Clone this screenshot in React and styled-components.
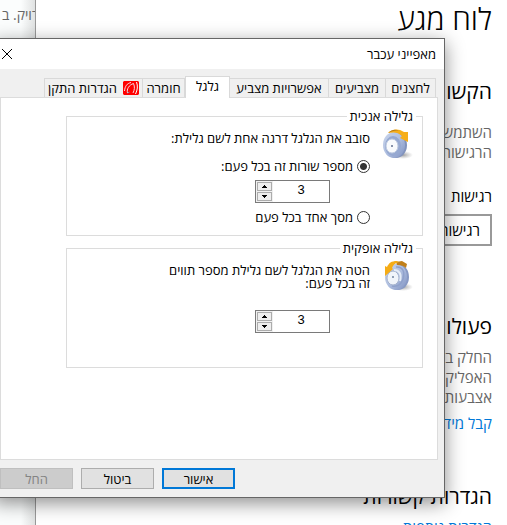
import React, { useState } from "react";
// Styling
import styled, { createGlobalStyle } from "styled-components";

const tabs = [
  { label: "לחצנים", width: 50 },
  { label: "מצביעים", width: 57 },
  { label: "אפשרויות מצביע", width: 99 },
  { label: "גלגל", width: 45 },
  { label: "חומרה", width: 42 },
  { label: "הגדרות התקן", width: 99, logo: true },
];

// TOUCHPAD VENDOR LOGO
const DeviceLogo = () => (
  <svg width="16" height="14" viewBox="0 0 16 14" aria-hidden="true">
    <path d="M1 0h14l1 1v12l-1 1H1l-1-1V1z" fill="#f00" />
    <path
      d="M1.500 10C2 5 4 2.500 8 1.500M4.500 12C3.500 8 6 4 10.500 2.500M10.500 2.500C12 6 11.500 9 10 12"
      fill="none"
      stroke="#f3dfe4"
    />
    <path d="M13.500 1C15 5 14.500 9 12.500 13" fill="none" stroke="#fff" />
    <path d="M4.500 12l2-1" fill="none" stroke="#88a" />
  </svg>
);

// WHEEL WITH THE SCROLL ARROW, TILTED VERSION FOR HORIZONTAL SCROLLING
const WheelIcon = ({ tilted }) => (
  <Wheel width="32" height="32" viewBox="0 0 32 32" aria-hidden="true">
    <defs>
      <linearGradient id="tyre" x1="0" y1="0" x2="1" y2="1">
        <stop offset="0" stopColor="#c9d5ec" />
        <stop offset="0.5" stopColor="#afbfe0" />
        <stop offset="1" stopColor="#8093c2" />
      </linearGradient>
      <radialGradient id="floor">
        <stop offset="0" stopColor="#777" stopOpacity="0.7" />
        <stop offset="1" stopColor="#999" stopOpacity="0" />
      </radialGradient>
    </defs>
    <ellipse cx="21" cy="27" rx="10" ry="4" fill="url(#floor)" />
    {tilted ? (
      <>
        <ellipse cx="16" cy="17" rx="11" ry="13" fill="#8799c4" />
        <ellipse cx="14" cy="17" rx="11" ry="13" fill="url(#tyre)" />
        <path
          d="M14 7C21 6 23 12 21 19C19 25 15 27 10 26"
          fill="none"
          stroke="#8fa1cb"
          strokeWidth="1.5"
        />
        <path d="M14 2l6-1 5 3-1 4c-2-2-5-3-9-3z" fill="#c07f1a" />
        <ellipse cx="11" cy="18" rx="6" ry="7" fill="#f0f4fa" stroke="#a3b1cd" />
        <path d="M12 10c5 0 8 4 6 11" fill="none" stroke="#e4ebf6" strokeWidth="2" />
        <circle cx="11" cy="17" r="1" fill="#71839e" />
        <path d="M3 16V6l2 1c2-4 4-6 10-6l2 1c-4 1-6 3-7 6l1 1z" fill="#f5ac16" />
      </>
    ) : (
      <>
        <ellipse cx="14" cy="17" rx="11" ry="13" fill="#8193bd" />
        <ellipse cx="12" cy="17" rx="11" ry="13" fill="url(#tyre)" />
        <ellipse cx="11" cy="18" rx="8" ry="10" fill="#96a9d1" />
        <ellipse cx="10" cy="18" rx="6" ry="7" fill="#f9fbfd" stroke="#bdc9df" />
        <circle cx="10" cy="18" r="1" fill="#60718f" />
        <path d="M6 5C10 1 16 0 22 4h4v10l-8-4 2-2C16 4 12 4 6 5z" fill="#f6ae18" />
        <path d="M6 5c4-4 8-4 12-2-4-1-8 0-12 2z" fill="#b97a13" />
      </>
    )}
  </Wheel>
);

const Spinner = ({ label }) => {
  const [value, setValue] = useState(3);
  return (
    <SpinBox>
      <SpinInput
        aria-label={label}
        value={value}
        onChange={(e) => setValue(Number(e.target.value) || 0)}
      />
      <SpinButtons>
        <SpinButton aria-label="הגדל" onClick={() => setValue(value + 1)}>
          <svg width="5" height="3" viewBox="0 0 5 3">
            <path d="M2 0h1v1h1v1h1v1H0V2h1V1h1z" />
          </svg>
        </SpinButton>
        <SpinButton aria-label="הקטן" onClick={() => setValue(value - 1)}>
          <svg width="5" height="3" viewBox="0 0 5 3">
            <path d="M0 0h5v1H4v1H3v1H2V2H1V1H0z" />
          </svg>
        </SpinButton>
      </SpinButtons>
    </SpinBox>
  );
};

const App = () => {
  const [current, setCurrent] = useState("גלגל");
  const [mode, setMode] = useState("lines");

  return (
    <Desktop dir="rtl">
      <GlobalStyle />
      <Settings>
        <Title>לוח מגע</Title>
        <Section>
          <Heading $spaced>הקשות</Heading>
          <Note>
            השתמש
            <br />
            הרגישות
          </Note>
          <Field>
            <FieldLabel htmlFor="sensitivity">רגישות</FieldLabel>
            <Select id="sensitivity">
              <option>רגישות</option>
            </Select>
          </Field>
        </Section>
        <Section>
          <Heading>פעולות</Heading>
          <Note>
            החלק ב
            <br />
            האפליק
            <br />
            אצבעות
          </Note>
          <Link href="#more">קבל מידע</Link>
        </Section>
        <Section>
          <Heading>הגדרות קשורות</Heading>
          <Link href="#related">הגדרות נוספות</Link>
        </Section>
      </Settings>
      <BackWindow>
        <BackLine>נמצאים ה</BackLine>
        <BackLine>דויק. ב</BackLine>
      </BackWindow>

      <Dialog role="dialog" aria-labelledby="dialog-title">
        <TitleBar>
          <DialogTitle id="dialog-title">מאפייני עכבר</DialogTitle>
          <CloseButton aria-label="סגור">
            <svg width="10" height="10" viewBox="0 0 10 10">
              <path d="M0 0l10 10M10 0L0 10" stroke="#000" />
            </svg>
          </CloseButton>
        </TitleBar>
        <DialogBody>
          <TabList role="tablist">
            {tabs.map((tab) => (
              <Tab
                key={tab.label}
                role="tab"
                aria-selected={tab.label === current}
                $active={tab.label === current}
                $width={tab.width}
                onClick={() => setCurrent(tab.label)}
              >
                {tab.logo && <DeviceLogo />}
                {tab.label}
              </Tab>
            ))}
          </TabList>
          <Panel role="tabpanel">
            <Group>
              <Legend>גלילה אנכית</Legend>
              <WheelIcon />
              <GroupContent>
                <Text>סובב את הגלגל דרגה אחת לשם גלילת:</Text>
                <RadioLabel>
                  <Radio
                    name="mode"
                    checked={mode === "lines"}
                    onChange={() => setMode("lines")}
                  />
                  מספר שורות זה בכל פעם:
                </RadioLabel>
                <Spinner label="מספר שורות" />
                <RadioLabel>
                  <Radio
                    name="mode"
                    checked={mode === "screen"}
                    onChange={() => setMode("screen")}
                  />
                  מסך אחד בכל פעם
                </RadioLabel>
              </GroupContent>
            </Group>
            <Group>
              <Legend>גלילה אופקית</Legend>
              <WheelIcon tilted />
              <GroupContent $spread>
                <Text>
                  הטה את הגלגל לשם גלילת מספר תווים
                  <br />
                  זה בכל פעם:
                </Text>
                <Spinner label="מספר תווים" />
              </GroupContent>
            </Group>
          </Panel>
          <Footer>
            <Button $primary>אישור</Button>
            <Button>ביטול</Button>
            <Button disabled>החל</Button>
          </Footer>
        </DialogBody>
      </Dialog>
    </Desktop>
  );
};

const GlobalStyle = createGlobalStyle`
  * {
    box-sizing: border-box;
  }
  body {
    margin: 0;
    background: #fff;
    font-family: "Open Sans", "Liberation Sans", sans-serif;
  }
  button, input, select {
    font: inherit;
    color: inherit;
    margin: 0;
    padding: 0;
  }
`;

const Desktop = styled.div`
  position: relative;
  display: grid;
  grid-template-columns: 1fr 36px;
  height: 100vh;
  overflow: hidden;
`;

const Settings = styled.main`
  display: flex;
  flex-direction: column;
  gap: 47px;
  padding-right: 15px;
  min-width: 0;
  color: #000;
`;

const Title = styled.h1`
  margin: 0 0 -10px;
  font-size: 30px;
  font-weight: 300;
  line-height: 38px;
`;

const Section = styled.section`
  display: flex;
  flex-direction: column;
  align-items: flex-start;
`;

const Heading = styled.h2`
  margin: 0 0 ${(props) => (props.$spaced ? "15px" : "5px")};
  font-size: 21px;
  font-weight: 400;
  line-height: 32px;
`;

const Note = styled.p`
  margin: 0 0 6px;
  color: #666;
  font-size: 15px;
  line-height: 20px;
`;

const Field = styled.div`
  display: flex;
  flex-direction: column;
  gap: 8px;
  width: 50%;
  margin: 18px 0 17px;
`;

const FieldLabel = styled.label`
  font-size: 15px;
  line-height: 20px;
`;

const Select = styled.select`
  appearance: none;
  height: 32px;
  padding: 0 10px;
  border: 2px solid #999;
  border-radius: 0;
  background: #fff;
  font-size: 15px;
`;

const Link = styled.a`
  color: #0078d7;
  font-size: 15px;
  line-height: 20px;
  text-decoration: none;
`;

const BackWindow = styled.aside`
  display: flex;
  flex-direction: column;
  align-items: flex-end;
  overflow: hidden;
  padding-left: 2px;
  border-right: 1px solid #999;
  background: linear-gradient(to left, #e0e2e2, #fbfdfd 14px);
`;

const BackLine = styled.span`
  color: #666;
  font-size: 14px;
  line-height: 20px;
  white-space: nowrap;

  &:first-child {
    margin-top: -15px;
  }
`;

const Dialog = styled.div`
  position: absolute;
  top: 38px;
  left: -7px;
  right: 62px;
  border: 1px solid #666;
  background: #f0f0f0;
  box-shadow: 0 5px 18px rgba(0, 0, 0, 0.45);
  color: #000;
  font-size: 13px;
  line-height: 16px;
`;

const TitleBar = styled.header`
  display: flex;
  align-items: center;
  justify-content: space-between;
  height: 30px;
  padding: 0 8px;
  background: #fff;
`;

const DialogTitle = styled.h2`
  margin: 0;
  font-size: 13px;
  font-weight: 400;
`;

const CloseButton = styled.button`
  display: flex;
  border: 0;
  background: none;
`;

const DialogBody = styled.div`
  padding: 7px 6px 8px;
`;

const TabList = styled.div`
  display: flex;
  align-items: flex-end;
  padding-right: 2px;
`;

const Tab = styled.button`
  display: flex;
  align-items: center;
  justify-content: center;
  gap: 6px;
  flex: 0 0 ${(props) => props.$width}px;
  height: ${(props) => (props.$active ? "22px" : "19px")};
  margin-bottom: ${(props) => (props.$active ? "-1px" : "0")};
  padding-bottom: ${(props) => (props.$active ? "3px" : "0")};
  border: 1px solid #d9d9d9;
  border-bottom: 0;
  border-left-width: ${(props) => (props.$active ? "1px" : "0")};
  background: ${(props) => (props.$active ? "#fff" : "#f0f0f0")};
  white-space: nowrap;

  &:last-child {
    border-left-width: 1px;
  }
`;

const Panel = styled.div`
  display: flex;
  flex-direction: column;
  gap: 4px;
  min-height: 363px;
  padding: 10px 14px 11px 65px;
  border: 1px solid #dcdcdc;
  background: #fff;
`;

const Group = styled.fieldset`
  display: flex;
  gap: 12px;
  min-width: 0;
  min-height: 128px;
  margin: 0;
  padding: 4px 8px 0;
  border: 1px solid #dcdcdc;
`;

const Legend = styled.legend`
  margin-right: -2px;
  padding: 0 3px;
`;

const Wheel = styled.svg`
  flex: none;
`;

const GroupContent = styled.div`
  display: flex;
  flex-direction: column;
  align-items: flex-start;
  gap: ${(props) => (props.$spread ? "20px" : "0")};
  padding-top: 4px;
`;

const Text = styled.p`
  margin: 0;
  line-height: 13px;
`;

const RadioLabel = styled.label`
  display: flex;
  align-items: center;
  gap: 4px;
  height: 28px;

  ${Text} + & {
    margin-top: 7px;
  }
`;

const Radio = styled.input.attrs({ type: "radio" })`
  appearance: none;
  width: 13px;
  height: 13px;
  border: 1px solid #333;
  border-radius: 50%;
  background: #fff;

  &:checked {
    background: radial-gradient(#333 3px, #fff 4px);
  }
`;

const SpinBox = styled.div`
  display: flex;
  width: 75px;
  height: 23px;
  margin-right: 40px;
  border: 1px solid #7a7a7a;
  background: #fff;
`;

const SpinInput = styled.input`
  flex: 1;
  min-width: 0;
  border: 0;
  padding-bottom: 4px;
  background: none;
  font-family: "Liberation Sans", sans-serif;
  text-align: center;
`;

const SpinButtons = styled.div`
  display: flex;
  flex-direction: column;
  gap: 1px;
  width: 17px;
  padding: 1px;
  background: #f0f0f0;
`;

const SpinButton = styled.button`
  display: flex;
  flex: 1;
  align-items: center;
  justify-content: center;
  border: 1px solid #acacac;
  background: #eee;
`;

const Footer = styled.footer`
  display: flex;
  justify-content: flex-end;
  gap: 8px;
  padding-top: 8px;
`;

const Button = styled.button`
  width: 73px;
  height: 21px;
  border: ${(props) => (props.$primary ? "2px solid #0078d7" : "1px solid #adadad")};
  background: #e1e1e1;

  &:disabled {
    border-color: #bfbfbf;
    background: #ccc;
    color: #838383;
  }
`;

export default App;
